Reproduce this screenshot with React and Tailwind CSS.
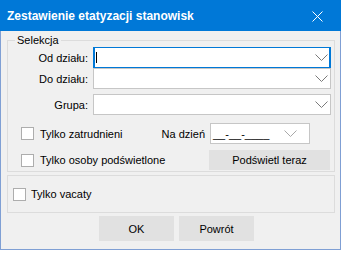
import React from 'react'

function Chevron({ color = '#7a7a7a' }) {
  return (
    <svg width="13" height="7" viewBox="0 0 13 7" fill="none">
      <path d="M0.5 0.5 L6.5 6.5 L12.5 0.5" stroke={color} strokeWidth="1" />
    </svg>
  )
}

function Combo({ focused }) {
  return (
    <div
      className={
        focused
          ? 'flex h-[21px] flex-1 items-center border-x-2 border-y border-[#0078d7] bg-white pl-px pr-px'
          : 'flex h-[21px] flex-1 items-center border border-[#c6c6c6] bg-white pr-[2px]'
      }
    >
      {focused && <span className="h-[11px] w-px bg-black" />}
      <span className="ml-auto">
        <Chevron />
      </span>
    </div>
  )
}

function Check() {
  return <span className="h-[13px] w-[13px] shrink-0 border border-[#adadad] bg-white" />
}

function Row({ label, className = '', children }) {
  return (
    <div className={'flex h-[21px] items-center gap-[5px] ' + className}>
      <span className="w-[80px] text-right">{label}</span>
      {children}
    </div>
  )
}

export default function App() {
  return (
    <div className="flex h-[250px] w-[341px] flex-col bg-[#f0f0f0] font-[family-name:Liberation_Sans,Arial,sans-serif] text-[11px] leading-[14px] text-black">
      {/* title bar */}
      <div className="flex h-[31px] shrink-0 items-center justify-between bg-[#0078d7] pl-[7px] pr-[18px] pt-px text-white">
        <span className="text-[12px] font-bold">Zestawienie etatyzacji stanowisk</span>
        <svg width="11" height="11" viewBox="0 0 11 11" fill="none">
          <path d="M0.5 0.5 L10.5 10.5 M10.5 0.5 L0.5 10.5" stroke="#fff" strokeWidth="1" />
        </svg>
      </div>

      <div className="flex flex-1 flex-col border-x border-b border-[#7f9fd4] pl-[6px] pr-[5px] pt-[2px]">
        <fieldset className="border border-[#dcdcdc] pb-px pr-[3px]">
          <legend className="ml-[7px] px-[2px] leading-[14px]">Selekcja</legend>

          <Row label="Od działu:">
            <Combo focused />
          </Row>
          <Row label="Do działu:">
            <Combo />
          </Row>
          <Row label="Grupa:" className="mt-[5px]">
            <Combo />
          </Row>

          <div className="mt-[8px] flex h-[21px] items-center pl-[13px] pr-[21px]">
            <Check />
            <span className="ml-[6px]">Tylko zatrudnieni</span>
            <span className="ml-auto mr-[5px]">Na dzień</span>
            <div className="flex h-[21px] w-[100px] items-center justify-between border border-[#c6c6c6] bg-white pl-[2px] pr-[12px]">
              <span>__-__-____</span>
              <Chevron color="#a8a8a8" />
            </div>
          </div>

          <div className="mt-[6px] flex h-[20px] items-center pl-[13px] pr-px">
            <Check />
            <span className="ml-[6px]">Tylko osoby podświetlone</span>
            <button className="ml-auto h-[20px] w-[121px] bg-[#e1e1e1]">Podświetl teraz</button>
          </div>
        </fieldset>

        <div className="mt-[3px] flex h-[38px] items-center border border-[#dcdcdc] pl-[5px]">
          <Check />
          <span className="ml-[5px]">Tylko vacaty</span>
        </div>

        <div className="mt-[3px] flex gap-[5px] pl-[92px]">
          <button className="h-[25px] w-[75px] bg-[#e1e1e1]">OK</button>
          <button className="h-[25px] w-[75px] bg-[#e1e1e1]">Powrót</button>
        </div>
      </div>
    </div>
  )
}
